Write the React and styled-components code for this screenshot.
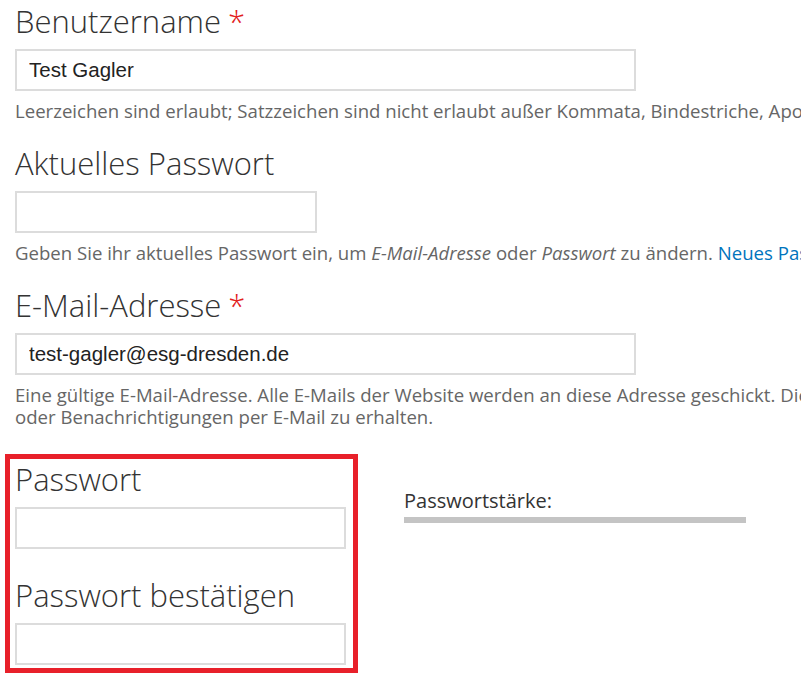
import React from "react"
import styled, { createGlobalStyle } from "styled-components"

const GlobalStyle = createGlobalStyle`
  html, body {
    margin: 0;
    padding: 0;
    background: #fff;
    overflow: hidden;
  }
  body {
    font-family: "Open Sans", "DejaVu Sans", sans-serif;
    color: #333;
  }
`

const Page = styled.form`
  padding: 3px 0 0 5px;
  width: 1600px;
`

const FormItem = styled.div`
  padding-left: 10px;
  margin-bottom: 23px;
`

const Label = styled.label`
  display: block;
  margin: 0 0 10px;
  font-family: "Open Sans", sans-serif;
  font-weight: 300;
  font-size: 31px;
  line-height: 36px;
  color: #333;
`

const Required = styled.span`
  color: #e2201c;
  margin-left: 7px;
`

const TextInput = styled.input`
  display: block;
  box-sizing: border-box;
  width: ${p => p.$width}px;
  height: 42px;
  margin: 0;
  padding: 0 12px;
  border: 2px solid #dcdcdc;
  border-radius: 0;
  background: #fff;
  font-family: "Liberation Sans", Arial, sans-serif;
  font-size: 20.5px;
  color: #222;
  outline: none;
`

const Description = styled.div`
  margin-top: 9px;
  font-size: 18.6px;
  line-height: 22px;
  color: #666;
  white-space: nowrap;

  em {
    font-style: italic;
  }
`

const Link = styled.a`
  color: #0074bd;
  text-decoration: none;
`

const PasswordRow = styled.div`
  display: flex;
  align-items: flex-start;
  gap: 46px;
  margin-top: 26px;
`

const HighlightBox = styled.div`
  width: 338px;
  padding: 2px 0 3px 5px;
  border: 5px solid #e8202a;
`

const PasswordItem = styled.div`
  & + & {
    margin-top: 28px;
  }
`

const Strength = styled.div`
  padding-top: 35px;
  width: 342px;
`

const StrengthTitle = styled.div`
  font-size: 20px;
  line-height: 24px;
  color: #333;
`

const StrengthBar = styled.div`
  height: 6px;
  margin-top: 4px;
  background: #c4c4c4;
`

export default function App() {
  return (
    <>
      <GlobalStyle />
      <Page>
        <FormItem>
          <Label>
            Benutzername<Required>*</Required>
          </Label>
          <TextInput $width={621} defaultValue="Test Gagler" />
          <Description>
            Leerzeichen sind erlaubt; Satzzeichen sind nicht erlaubt außer
            Kommata, Bindestriche, Apostrophe, Unterstriche und Punkte.
          </Description>
        </FormItem>

        <FormItem>
          <Label>Aktuelles Passwort</Label>
          <TextInput $width={302} type="password" />
          <Description>
            Geben Sie ihr aktuelles Passwort ein, um <em>E-Mail-Adresse</em>{" "}
            oder <em>Passwort</em> zu ändern.{" "}
            <Link href="#">Neues Passwort anfordern</Link>.
          </Description>
        </FormItem>

        <FormItem>
          <Label>
            E-Mail-Adresse<Required>*</Required>
          </Label>
          <TextInput $width={621} defaultValue="test-gagler@esg-dresden.de" />
          <Description>
            Eine gültige E-Mail-Adresse. Alle E-Mails der Website werden an
            diese Adresse geschickt. Die Adresse wird nicht veröffentlicht und
            wird nur verwendet, wenn Sie ein neues Passwort anfordern
            <br />
            oder Benachrichtigungen per E-Mail zu erhalten.
          </Description>
        </FormItem>

        <PasswordRow>
          <HighlightBox>
            <PasswordItem>
              <Label>Passwort</Label>
              <TextInput $width={331} type="password" />
            </PasswordItem>
            <PasswordItem>
              <Label>Passwort bestätigen</Label>
              <TextInput $width={331} type="password" />
            </PasswordItem>
          </HighlightBox>
          <Strength>
            <StrengthTitle>Passwortstärke:</StrengthTitle>
            <StrengthBar />
          </Strength>
        </PasswordRow>
      </Page>
    </>
  )
}
